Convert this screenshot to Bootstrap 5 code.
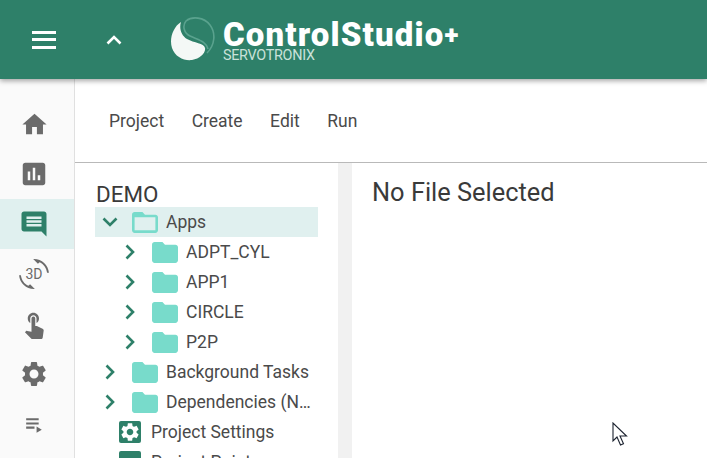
<!DOCTYPE html>
<html lang="en">
<head>
    <meta charset="UTF-8">
    <meta name="viewport" content="width=device-width, initial-scale=1.0">
    <title>ControlStudio+</title>
    <link href="https://cdn.jsdelivr.net/npm/bootstrap@5.3.0/dist/css/bootstrap.min.css" rel="stylesheet">
    <style>
        html, body {
            height: 100%;
            overflow: hidden;
        }
        body {
            font-family: Roboto, "Liberation Sans", sans-serif;
            color: #333;
            background-color: #fff;
        }
        .app-shell {
            height: 458px;
            position: relative;
        }
        .top-bar {
            height: 79px;
            padding: 0 0 0 32px;
            background-color: #2e8069;
            box-shadow: 0 2px 5px rgba(0,0,0,.35);
            position: relative;
            z-index: 2;
            flex-wrap: nowrap;
            justify-content: flex-start;
        }
        .menu-toggle {
            width: 24px;
            height: 18px;
            border-top: 3px solid #fff;
            border-bottom: 3px solid #fff;
            position: relative;
        }
        .menu-toggle::after {
            content: "";
            position: absolute;
            left: 0;
            right: 0;
            top: 4.5px;
            height: 3px;
            background-color: #fff;
        }
        .collapse-up {
            margin-left: 50px;
            margin-right: 48px;
        }
        .logo-mark {
            margin-top: -1px;
        }
        .logo-words {
            margin-left: 7px;
            color: #fff;
            margin-top: 3px;
        }
        .logo-name {
            font-size: 33px;
            font-weight: 900;
            line-height: 28px;
            letter-spacing: 1.15px;
        }
        .logo-plus {
            font-size: 26px;
            vertical-align: 2px;
        }
        .logo-sub {
            font-size: 14.4px;
            line-height: 13px;
            letter-spacing: -.3px;
            color: #c9e2da;
        }
        .work-area {
            height: 379px;
        }
        .side-rail {
            width: 75px;
            flex: none;
            padding-top: 20px;
            background-color: #fafafa;
            border-right: 1px solid #e0e0e0;
        }
        .rail-item {
            height: 50px;
            padding-right: 6px;
        }
        .rail-item.is-active {
            background-color: #e0f0ef;
        }
        .rail-item svg {
            fill: #6b6b6b;
        }
        .rail-item.is-active svg {
            fill: #2e8069;
        }
        .rail-3d {
            position: relative;
            width: 30px;
            height: 30px;
        }
        .rail-3d span {
            position: absolute;
            inset: 0;
            font-size: 14px;
            line-height: 30px;
            text-align: center;
            color: #6b6b6b;
        }
        .menu-strip {
            height: 83px;
            padding-left: 34px;
            gap: 27.5px;
            flex: none;
            border-bottom: 1px solid #b9b9b9;
            box-sizing: content-box;
        }
        .menu-strip .nav-link {
            padding: 2px 0 0;
            font-size: 17.5px;
            color: #4a4a4a;
        }
        .panes {
            min-height: 0;
        }
        .tree-pane {
            width: 263px;
            flex: none;
            padding: 18px 20px 0 20px;
            overflow: hidden;
        }
        .tree-title {
            font-size: 22.4px;
            line-height: 26px;
            padding-left: 1px;
            color: #3a3a3a;
        }
        .tree-row {
            height: 30px;
            border: 0;
            padding: 0;
            background: transparent;
            font-size: 17.5px;
            color: #4a4a4a;
            white-space: nowrap;
        }
        .tree-row.is-open {
            background-color: #e0f0ef;
        }
        .depth-2 {
            padding-left: 20px;
        }
        .depth-leaf {
            padding-left: 24px;
        }
        .tree-chevron {
            width: 30px;
            flex: none;
            text-align: center;
            line-height: 0;
        }
        .tree-folder {
            margin-left: 7px;
            margin-right: 8px;
            flex: none;
            fill: #78dbcb;
        }
        .tree-label {
            overflow: hidden;
        }
        .leaf-icon {
            width: 22px;
            height: 22px;
            margin-right: 10px;
            flex: none;
            border-radius: 2px;
            background-color: #2e8069;
        }
        .leaf-icon svg {
            fill: #fff;
        }
        .scroll-track {
            width: 14px;
            flex: none;
            background-color: #f1f1f1;
        }
        .doc-pane {
            padding: 13px 20px;
        }
        .doc-title {
            font-size: 25.4px;
            font-weight: 400;
            line-height: 32px;
            margin: 0;
            color: #3a3a3a;
        }
        .mouse-arrow {
            position: absolute;
            left: 612px;
            top: 422px;
        }
    </style>
</head>
<body>
    <div class="app-shell">
        <nav class="navbar top-bar">
            <div class="menu-toggle"></div>
            <svg class="collapse-up" width="16" height="10" viewBox="0 0 16 10"><path d="M1.500 8.500 8 2l6.500 6.500" fill="none" stroke="#fff" stroke-width="2.600"/></svg>
            <svg class="logo-mark" width="46" height="44" viewBox="0 0 46 44">
                <path d="M11 5C3 10-1 22 2 31c3 9 12 13 20 12 8-1 14-7 13-12-1-5-11-5-18-9C11 18 9 11 11 5z" fill="#f4f8f6"/>
                <path d="M37 36c8-8 9-20 3-28C34 0 22-1 16 4c-4 5-2 12 4 15 8 4 16 5 18 13" fill="none" stroke="#5aa28e" stroke-width="1.600"/>
            </svg>
            <div class="logo-words">
                <div class="logo-name">ControlStudio<span class="logo-plus">+</span></div>
                <div class="logo-sub">SERVOTRONIX</div>
            </div>
        </nav>

        <div class="work-area d-flex">
            <div class="side-rail">
                <div class="rail-item d-flex align-items-center justify-content-center">
                    <svg width="29" height="29" viewBox="0 0 24 24"><path d="M10 20v-6h4v6h5v-8h3L12 3 2 12h3v8z"/></svg>
                </div>
                <div class="rail-item d-flex align-items-center justify-content-center">
                    <svg width="30" height="30" viewBox="0 0 24 24"><path d="M19 3H5c-1.100 0-2 .9-2 2v14c0 1.100.9 2 2 2h14c1.100 0 2-.9 2-2V5c0-1.100-.9-2-2-2zM9 17H7v-7h2v7zm4 0h-2V7h2v10zm4 0h-2v-4h2v4z"/></svg>
                </div>
                <div class="rail-item is-active d-flex align-items-center justify-content-center">
                    <svg width="30" height="30" viewBox="0 0 24 24"><path transform="matrix(-1 0 0 1 24 0)" d="M20 2H4c-1.100 0-1.990.9-1.990 2L2 22l4-4h14c1.100 0 2-.9 2-2V4c0-1.100-.9-2-2-2zm-2 12H6v-2h12v2zm0-3H6V9h12v2zm0-3H6V6h12v2z"/></svg>
                </div>
                <div class="rail-item d-flex align-items-center justify-content-center">
                    <div class="rail-3d">
                        <svg width="30" height="30" viewBox="0 0 24 24"><path d="M7.520 21.480C4.250 19.940 1.910 16.760 1.550 13H.05C.56 19.160 5.710 24 12 24l.66-.03-3.810-3.810-1.330 1.320zM16.480 2.520c3.270 1.550 5.610 4.720 5.970 8.480h1.500C23.440 4.840 18.290 0 12 0l-.66.03 3.810 3.810 1.330-1.320z"/></svg>
                        <span>3D</span>
                    </div>
                </div>
                <div class="rail-item d-flex align-items-center justify-content-center">
                    <svg width="30" height="30" viewBox="0 0 24 24"><path d="M9 11.240V7.500C9 6.120 10.120 5 11.500 5S14 6.120 14 7.500v3.740c1.210-.81 2-2.180 2-3.740C16 5.010 13.990 3 11.500 3S7 5.010 7 7.500c0 1.560.79 2.930 2 3.740zm9.840 4.630l-4.540-2.260c-.17-.07-.35-.11-.54-.11H13v-6c0-.83-.67-1.500-1.500-1.500S10 6.670 10 7.500v10.740l-3.430-.72c-.08-.01-.15-.03-.24-.03-.31 0-.59.13-.79.33l-.79.8 4.940 4.940c.27.27.65.44 1.060.44h6.790c.75 0 1.330-.55 1.440-1.280l.75-5.270c.01-.07.02-.14.02-.2 0-.62-.38-1.160-.91-1.380z"/></svg>
                </div>
                <div class="rail-item d-flex align-items-center justify-content-center">
                    <svg width="30" height="30" viewBox="0 0 24 24"><path d="M19.140 12.940c.04-.3.06-.61.06-.94 0-.32-.02-.64-.07-.94l2.030-1.580c.18-.14.23-.41.12-.61l-1.920-3.320c-.12-.22-.37-.29-.59-.22l-2.390.96c-.5-.38-1.030-.7-1.620-.94l-.36-2.540c-.04-.24-.24-.41-.48-.41h-3.840c-.24 0-.43.17-.47.41l-.36 2.540c-.59.24-1.130.57-1.620.94l-2.390-.96c-.22-.08-.47 0-.59.22L2.740 8.870c-.12.21-.08.47.12.61l2.030 1.580c-.05.3-.09.63-.09.94s.02.64.07.94l-2.030 1.580c-.18.14-.23.41-.12.61l1.920 3.320c.12.22.37.29.59.22l2.390-.96c.5.38 1.030.7 1.620.94l.36 2.540c.05.24.24.41.48.41h3.840c.24 0 .44-.17.47-.41l.36-2.540c.59-.24 1.130-.56 1.620-.94l2.390.96c.22.08.47 0 .59-.22l1.920-3.320c.12-.22.07-.47-.12-.61l-2.010-1.580zM12 15.600c-1.980 0-3.600-1.620-3.600-3.600s1.620-3.600 3.600-3.600 3.600 1.620 3.600 3.600-1.620 3.600-3.600 3.600z"/></svg>
                </div>
                <div class="rail-item d-flex align-items-center justify-content-center">
                    <svg width="25" height="25" viewBox="0 0 24 24"><path d="M4 10h12v2H4zm0-4h12v2H4zm0 8h8v2H4zm10 0v6l5-3z"/></svg>
                </div>
            </div>

            <div class="flex-grow-1 d-flex flex-column">
                <ul class="nav menu-strip align-items-center flex-nowrap">
                    <li class="nav-item"><a class="nav-link" href="#">Project</a></li>
                    <li class="nav-item"><a class="nav-link" href="#">Create</a></li>
                    <li class="nav-item"><a class="nav-link" href="#">Edit</a></li>
                    <li class="nav-item"><a class="nav-link" href="#">Run</a></li>
                </ul>

                <div class="panes d-flex flex-grow-1">
                    <div class="tree-pane">
                        <div class="tree-title">DEMO</div>
                        <div class="list-group list-group-flush" id="tree"></div>
                    </div>
                    <div class="scroll-track"></div>
                    <div class="doc-pane flex-grow-1">
                        <h1 class="doc-title">No File Selected</h1>
                    </div>
                </div>
            </div>
        </div>

        <svg class="mouse-arrow" width="17" height="25" viewBox="0 0 17 25">
            <path d="M1 1v18l4-4 3.500 8 3-1.300-3.500-7.700h6.500z" fill="#fff" stroke="#1c2330" stroke-width="1.100"/>
        </svg>
    </div>

    <script src="https://cdn.jsdelivr.net/npm/bootstrap@5.3.0/dist/js/bootstrap.bundle.min.js"></script>
    <script>
        const folderShut = 'M10 4H4c-1.100 0-1.990.9-1.990 2L2 18c0 1.100.9 2 2 2h16c1.100 0 2-.9 2-2V8c0-1.100-.9-2-2-2h-8l-2-2z';
        const folderOpen = 'M20 6h-8l-2-2H4c-1.100 0-1.990.9-1.990 2L2 18c0 1.100.9 2 2 2h16c1.100 0 2-.9 2-2V8c0-1.100-.9-2-2-2zm0 12H4V8h16v10z';
        const gear = 'M19.140 12.940c.04-.3.06-.61.06-.94 0-.32-.02-.64-.07-.94l2.030-1.580c.18-.14.23-.41.12-.61l-1.920-3.320c-.12-.22-.37-.29-.59-.22l-2.390.96c-.5-.38-1.030-.7-1.620-.94l-.36-2.540c-.04-.24-.24-.41-.48-.41h-3.840c-.24 0-.43.17-.47.41l-.36 2.540c-.59.24-1.130.57-1.620.94l-2.390-.96c-.22-.08-.47 0-.59.22L2.740 8.870c-.12.21-.08.47.12.61l2.030 1.580c-.05.3-.09.63-.09.94s.02.64.07.94l-2.030 1.580c-.18.14-.23.41-.12.61l1.920 3.320c.12.22.37.29.59.22l2.390-.96c.5.38 1.030.7 1.620.94l.36 2.540c.05.24.24.41.48.41h3.840c.24 0 .44-.17.47-.41l.36-2.540c.59-.24 1.130-.56 1.620-.94l2.390.96c.22.08.47 0 .59-.22l1.920-3.320c.12-.22.07-.47-.12-.61l-2.010-1.580zM12 15.600c-1.980 0-3.600-1.620-3.600-3.600s1.620-3.600 3.600-3.600 3.600 1.620 3.600 3.600-1.620 3.600-3.600 3.600z';

        const rows = [
            { label: 'Apps', open: true },
            { label: 'ADPT_CYL', depth: 2 },
            { label: 'APP1', depth: 2 },
            { label: 'CIRCLE', depth: 2 },
            { label: 'P2P', depth: 2 },
            { label: 'Background Tasks' },
            { label: 'Dependencies (N…' },
            { label: 'Project Settings', leaf: gear },
            { label: 'Project Points', leaf: '' }
        ];

        const tree = document.getElementById('tree');
        rows.forEach(row => {
            if (row.leaf !== undefined) {
                const icon = row.leaf ? `<svg width="22" height="22" viewBox="0 0 24 24"><path d="${row.leaf}"/></svg>` : '';
                tree.innerHTML += `<div class="list-group-item tree-row depth-leaf d-flex align-items-center">
                    <span class="leaf-icon d-flex">${icon}</span><span class="tree-label">${row.label}</span></div>`;
                return;
            }
            const chevron = row.open
                ? '<svg width="16" height="10" viewBox="0 0 16 10"><path d="M1.500 1.500 8 8l6.500-6.500" fill="none" stroke="#2e8069" stroke-width="2.600"/></svg>'
                : '<svg width="10" height="16" viewBox="0 0 10 16"><path d="M1.500 1.500 8 8l-6.500 6.500" fill="none" stroke="#2e8069" stroke-width="2.600"/></svg>';
            tree.innerHTML += `<div class="list-group-item tree-row ${row.depth ? 'depth-2' : ''} ${row.open ? 'is-open' : ''} d-flex align-items-center">
                <span class="tree-chevron">${chevron}</span>
                <svg class="tree-folder" width="26" height="21" viewBox="2 4 20 16"><path d="${row.open ? folderOpen : folderShut}"/></svg>
                <span class="tree-label">${row.label}</span></div>`;
        });
    </script>
</body>
</html>
